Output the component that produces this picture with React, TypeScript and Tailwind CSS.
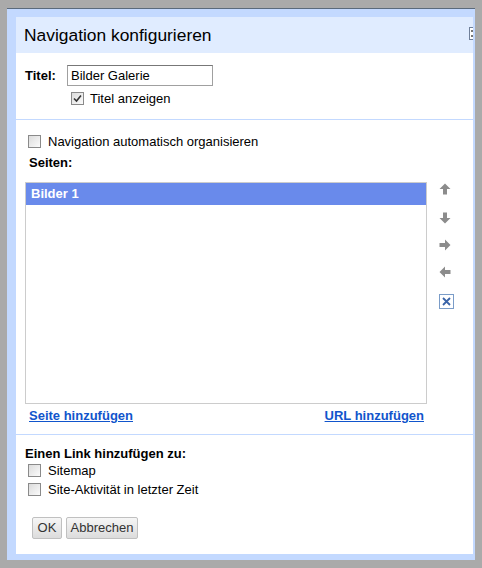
import React from "react";

function Box({ checked = false }: { checked?: boolean }) {
  return (
    <span className="w-[13px] h-[13px] border border-[#8a8a8a] bg-gradient-to-br from-[#dcdcdc] to-[#fbfbfb] flex items-center justify-center shrink-0">
      {checked && (
        <svg width="9" height="9" viewBox="0 0 9 9">
          <path d="M1 4.5 L3.5 7 L8 1.5" stroke="#333" strokeWidth="1.6" fill="none" />
        </svg>
      )}
    </span>
  );
}

function Arrow({ dir }: { dir: "up" | "down" | "right" | "left" }) {
  const rot = { up: 0, down: 180, right: 90, left: 270 }[dir];
  return (
    <svg width="12" height="12" viewBox="0 0 12 12">
      <g transform={`rotate(${rot} 6 6)`}>
        <path d="M6 0.5 L11.5 6 L8 6 L8 11.5 L4 11.5 L4 6 L0.5 6 Z" fill="#8c8c8c" />
      </g>
    </svg>
  );
}

export default function App() {
  return (
    <div
      className="w-[482px] h-[568px] bg-[#aaaaaa] pt-[8px] pl-[7px] pr-[7px] pb-[8px]"
      style={{ fontFamily: '"Liberation Sans", Arial, sans-serif' }}
    >
      <div className="h-full border-t border-[#5a6a7c] bg-[#c3d9ff] pt-[8px] pl-[9px] pr-[2px] pb-[6px]">
        <div className="h-full bg-white flex flex-col">
          {/* title bar */}
          <div className="relative h-[36px] bg-[#e0ecff] flex items-center pl-[8px] text-[17.4px] text-black overflow-hidden">
            Navigation konfigurieren
            <div className="absolute right-[-2px] top-[10px] w-[6px] h-[13px] border border-[#6f7f99] bg-white flex flex-col items-center justify-center gap-[3px]">
              <span className="w-[2px] h-[2px] bg-[#777]" />
              <span className="w-[2px] h-[2px] bg-[#777]" />
            </div>
          </div>

          {/* title */}
          <div className="h-[66px] pl-[9px] pt-[12px] text-[13px] text-black">
            <div className="flex items-center">
              <span className="font-bold w-[42px]">Titel:</span>
              <div className="w-[146px] h-[21px] border border-[#a0a0a0] border-t-[#777] flex items-center pl-[3px]">
                Bilder Galerie
              </div>
            </div>
            <div className="flex items-center ml-[46px] mt-[5px] leading-[15px]">
              <Box checked />
              <span className="ml-[6px]">Titel anzeigen</span>
            </div>
          </div>
          <div className="h-px bg-[#c3d9ff]" />

          {/* pages */}
          <div className="h-[314px] pl-[9px] text-[13px] text-black">
            <div className="flex items-center mt-[14px] ml-[3px] leading-[15px]">
              <Box />
              <span className="ml-[7px]">Navigation automatisch organisieren</span>
            </div>
            <div className="font-bold ml-[4px] mt-[6px] leading-[15px]">Seiten:</div>
            <div className="flex mt-[12px]">
              <div className="w-[402px] h-[222px] border border-[#cccccc]">
                <div className="h-[22px] bg-[#698aeb] text-white font-bold flex items-center pl-[5px]">
                  Bilder 1
                </div>
              </div>
              <div className="flex flex-col items-start ml-[12px] pt-[1px]">
                <Arrow dir="up" />
                <div className="mt-[17px]"><Arrow dir="down" /></div>
                <div className="mt-[15px]"><Arrow dir="right" /></div>
                <div className="mt-[15px]"><Arrow dir="left" /></div>
                <div className="mt-[16px] w-[15px] h-[15px] border border-[#7a9cc8] bg-white flex items-center justify-center">
                  <svg width="9" height="9" viewBox="0 0 9 9">
                    <path d="M1 1 L8 8 M8 1 L1 8" stroke="#3a64a8" strokeWidth="1.8" />
                  </svg>
                </div>
              </div>
            </div>
            <div className="flex justify-between w-[395px] ml-[4px] mt-[4px] leading-[15px] font-bold text-[#1155cc]">
              <span className="underline">Seite hinzufügen</span>
              <span className="underline">URL hinzufügen</span>
            </div>
          </div>
          <div className="h-px bg-[#c3d9ff]" />

          {/* links */}
          <div className="flex-1 pl-[9px] text-[13px] text-black">
            <div className="font-bold mt-[11px] leading-[15px]">Einen Link hinzufügen zu:</div>
            <div className="flex items-center mt-[2px] ml-[3px] leading-[15px]">
              <Box />
              <span className="ml-[7px]">Sitemap</span>
            </div>
            <div className="flex items-center mt-[4px] ml-[3px] leading-[15px]">
              <Box />
              <span className="ml-[7px]">Site-Aktivität in letzter Zeit</span>
            </div>
            <div className="flex gap-[4px] mt-[20px] ml-[7px]">
              <button className="h-[22px] w-[30px] border border-[#c0c0c0] rounded-[2px] bg-gradient-to-b from-[#f6f6f6] to-[#dcdcdc] text-[13px] text-[#333]">
                OK
              </button>
              <button className="h-[22px] w-[72px] border border-[#c0c0c0] rounded-[2px] bg-gradient-to-b from-[#f6f6f6] to-[#dcdcdc] text-[13px] text-[#333]">
                Abbrechen
              </button>
            </div>
          </div>
        </div>
      </div>
    </div>
  );
}
